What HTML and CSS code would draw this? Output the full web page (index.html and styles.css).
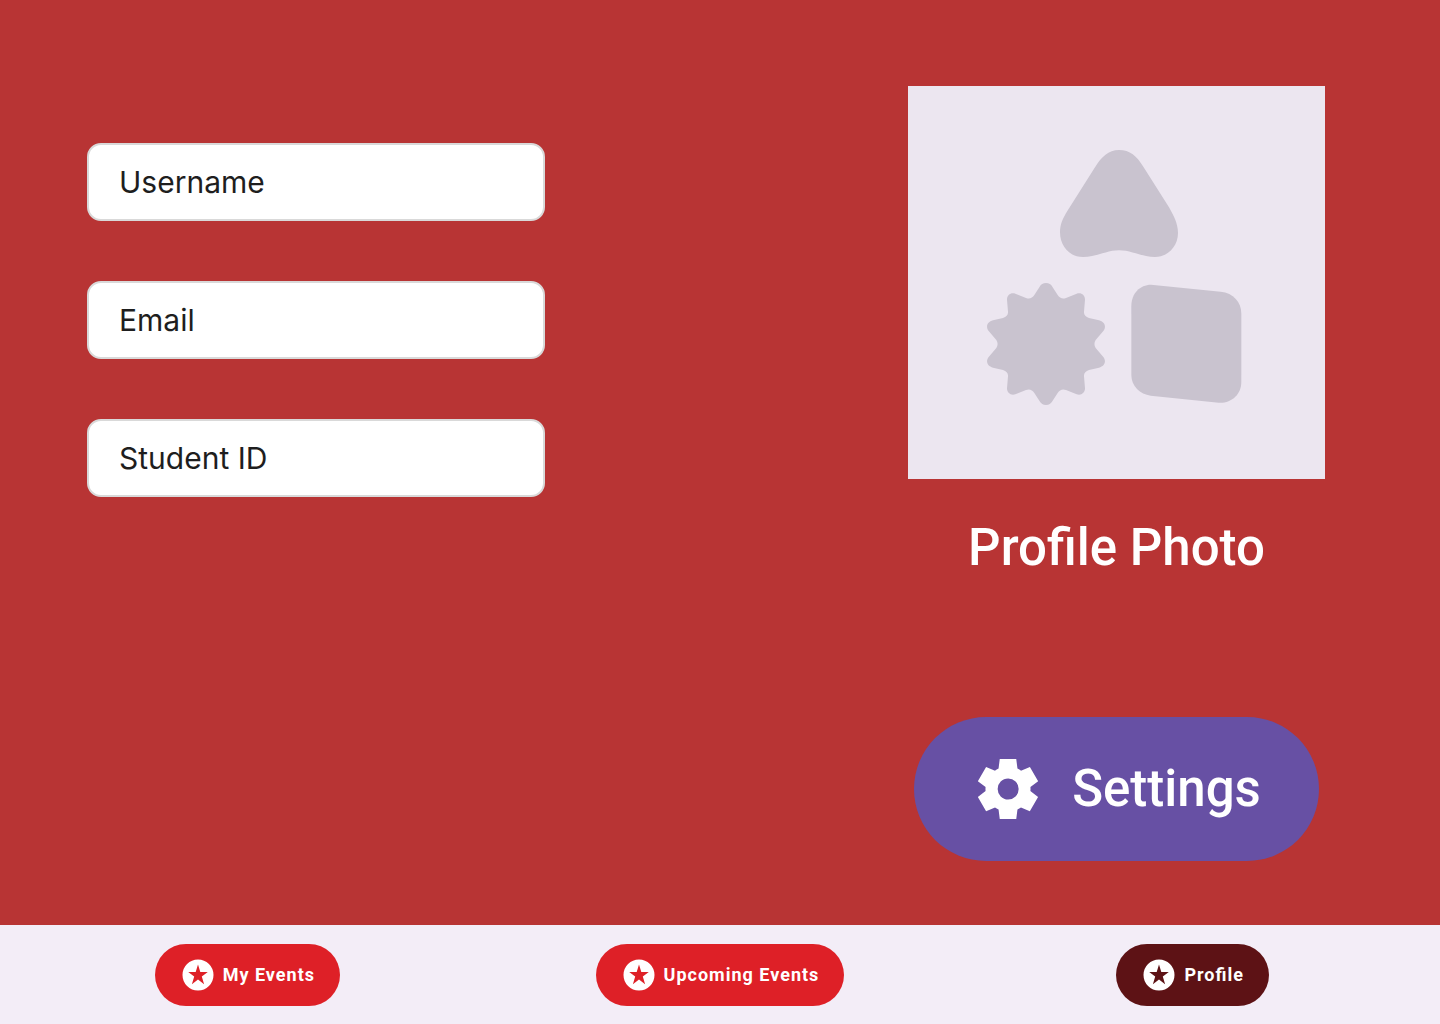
FILE: index.html
```html
<!DOCTYPE html>
<html lang="en">
<head>
<meta charset="utf-8">
<meta name="viewport" content="width=device-width, initial-scale=1">
<title>Profile</title>
<link rel="stylesheet" href="styles.css">
</head>
<body>
<svg class="sprite" aria-hidden="true">
  <symbol id="stars" viewBox="0 0 32 32">
    <path fill-rule="evenodd" d="M16 .5a15.5 15.5 0 1 1 0 31a15.5 15.5 0 1 1 0-31ZM16 5.6L13.7 13H6.2L12.2 17.6L9.9 25.2L16 20.6L22.1 25.2L19.8 17.6L25.8 13H18.3Z"/>
  </symbol>
</svg>
<main class="profile">
  <form class="fields">
    <input class="field" type="text" aria-label="Username" value="Username">
    <input class="field" type="text" aria-label="Email" value="Email">
    <input class="field" type="text" aria-label="Student ID" value="Student ID">
  </form>
  <section class="account">
    <svg class="photo" viewBox="-156 -132 1251 1179" role="img" aria-label="Profile photo placeholder">
      <path d="M477 60C510 60 530 78 550 110L627 232C640 255 654 280 654 309C654 350 622 381 585 381C545 381 515 361 477 361C440 361 410 381 369 381C325 381 300 345 300 307C300 283 308 266 322 243L405 112C425 80 445 60 477 60Z"/>
      <path d="M258 459C267 459 273 463 277 470L293 495C299 504 307 508 318 504L350 491C364 487 375 495 375 509L372 545C371 554 377 561 387 564L417 571C434 575 440 590 430 603L407 630C402 637 402 647 407 654L430 681C440 694 434 709 417 713L387 720C377 723 371 730 372 739L375 775C375 789 364 797 350 793L318 780C307 776 299 780 293 789L277 814C273 821 267 825 258 825C249 825 243 821 239 814L223 789C217 780 209 776 198 780L166 793C152 797 141 789 141 775L144 739C145 730 139 723 129 720L99 713C82 709 76 694 86 681L109 654C114 647 114 637 109 630L86 603C76 590 82 575 99 571L129 564C139 561 145 554 144 545L141 509C141 495 152 487 166 491L198 504C209 508 217 504 223 495L239 470C243 463 249 459 258 459Z"/>
      <path d="M573 464L782 485C820 489 844 516 844 551V755C844 793 815 820 776 818L572 797C540 793 514 768 514 735V528C514 490 540 464 573 464Z"/>
    </svg>
    <h1 class="title">Profile Photo</h1>
    <button class="settings" type="button">
      <svg class="gear" viewBox="0 0 24 24" aria-hidden="true"><path d="M9.25 22l-.4-3.2q-.325-.125-.612-.3t-.563-.375L4.7 19.375l-2.75-4.75 2.575-1.95Q4.5 12.5 4.5 12.338v-.675q0-.163.025-.338L1.95 9.375l2.75-4.75 2.975 1.25q.275-.2.575-.375t.6-.3l.4-3.2h5.5l.4 3.2q.325.125.613.3t.562.375l2.975-1.25 2.75 4.75-2.575 1.95q.025.175.025.338v.674q0 .163-.05.338l2.575 1.95-2.75 4.75-2.95-1.25q-.275.2-.575.375t-.6.3l-.4 3.2h-5.5Zm2.8-6.5q1.45 0 2.475-1.025T15.55 12q0-1.45-1.025-2.475T12.05 8.5q-1.475 0-2.488 1.025T8.55 12q0 1.45 1.012 2.475T12.05 15.5Z"/></svg>
      Settings
    </button>
  </section>
</main>
<nav class="tabs">
  <a class="tab" href="#events"><svg class="star" aria-hidden="true"><use href="#stars"/></svg>My Events</a>
  <a class="tab" href="#upcoming"><svg class="star" aria-hidden="true"><use href="#stars"/></svg>Upcoming Events</a>
  <a class="tab tab-current" href="#profile" aria-current="page"><svg class="star" aria-hidden="true"><use href="#stars"/></svg>Profile</a>
</nav>
</body>
</html>
```
FILE: styles.css
```css
* { box-sizing: border-box; }

body {
  margin: 0;
  min-height: 100vh;
  display: flex;
  flex-direction: column;
  background: #b83434;
  font-family: Roboto, sans-serif;
}

.sprite { display: none; }

.profile {
  flex: 1;
  display: flex;
  justify-content: space-between;
  align-items: flex-start;
  gap: 40px;
  padding: 86px 115px 64px 87px;
}

.fields {
  flex: 0 1 458px;
  display: flex;
  flex-direction: column;
  gap: 60px;
  padding-top: 57px;
}

.field {
  width: 100%;
  padding: 18px 30px;
  border: 2px solid #d9d9d9;
  border-radius: 14px;
  background: #fff;
  color: #1e1e1e;
  font: 400 30px/38px Inter, sans-serif;
}

.account {
  flex: 0 1 417px;
  display: flex;
  flex-direction: column;
  align-items: center;
}

.photo {
  width: 100%;
  background: #ece6f0;
  fill: #c9c3cf;
}

.title {
  margin: 32px 0 132px;
  color: #fff;
  font-size: 51px;
  font-weight: 500;
  line-height: 74px;
}

.settings {
  display: flex;
  align-items: center;
  gap: 28px;
  padding: 36px 58px;
  border: 0;
  border-radius: 72px;
  background: #6750a4;
  color: #fff;
  font: 500 51px/72px Roboto, sans-serif;
}

.gear {
  width: 72px;
  height: 72px;
  fill: currentColor;
}

.tabs {
  display: grid;
  grid-template-columns: repeat(3, 1fr);
  justify-items: center;
  padding: 19px 11px 18px;
  background: #f3edf7;
}

.tab {
  display: flex;
  align-items: center;
  gap: 9px;
  padding: 15px 25px 15px 27px;
  border-radius: 31px;
  background: #de2027;
  color: #fff;
  font-size: 18px;
  font-weight: 700;
  line-height: 32px;
  letter-spacing: 1px;
  font-feature-settings: "liga" 1;
  text-decoration: none;
}

.tab-current { background: #5d1215; }

.star {
  width: 32px;
  height: 32px;
  fill: currentColor;
}
```
